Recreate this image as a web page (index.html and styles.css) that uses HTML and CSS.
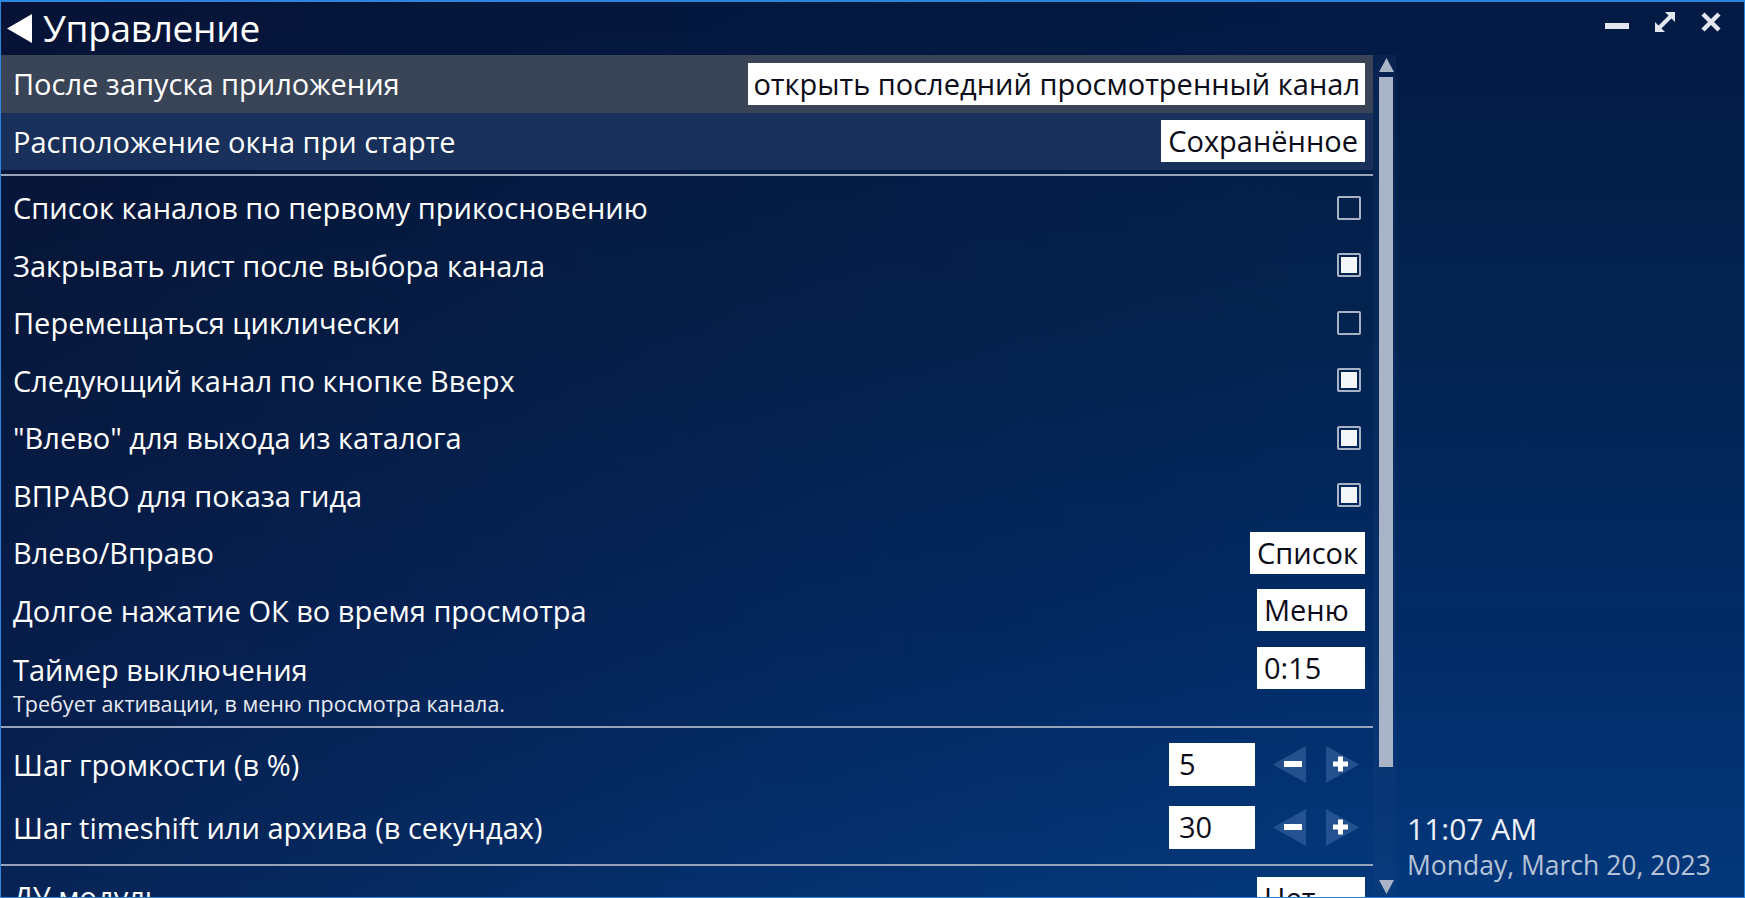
FILE: index.html
```html
<!DOCTYPE html>
<html lang="ru">
<head>
<meta charset="utf-8">
<title>Управление</title>
<link rel="stylesheet" href="styles.css">
</head>
<body>
<div class="window">
  <header class="titlebar">
    <div class="title">
      <svg class="back" width="26" height="30" viewBox="0 0 26 30"><polygon points="25,0 25,29 0,14.5" fill="#fff"/></svg>
      <span>Управление</span>
    </div>
    <div class="wincontrols">
      <svg class="wc wc-min" width="24" height="20" viewBox="0 0 24 20"><rect x="0" y="11" width="24" height="6" fill="#e2e6ee"/></svg>
      <svg class="wc wc-max" width="20" height="20" viewBox="0 0 20 20"><line x1="4" y1="16" x2="16" y2="4" stroke="#e2e6ee" stroke-width="4"/><polygon points="20,0 20,10 10,0" fill="#e2e6ee"/><polygon points="0,20 0,10 10,20" fill="#e2e6ee"/></svg>
      <svg class="wc wc-close" width="20" height="20" viewBox="0 0 20 20"><line x1="2" y1="2" x2="18" y2="18" stroke="#e2e6ee" stroke-width="4.5"/><line x1="18" y1="2" x2="2" y2="18" stroke="#e2e6ee" stroke-width="4.5"/></svg>
    </div>
  </header>
  <div class="main">
    <div class="list">
      <div class="row row-hl"><span class="label">После запуска приложения</span><span class="value value-wide">открыть последний просмотренный канал</span></div>
      <div class="row row-hl2"><span class="label">Расположение окна при старте</span><span class="value">Сохранённое</span></div>
      <div class="sep sep-first"></div>
      <div class="row"><span class="label">Список каналов по первому прикосновению</span><span class="check"></span></div>
      <div class="row"><span class="label">Закрывать лист после выбора канала</span><span class="check checked"></span></div>
      <div class="row"><span class="label">Перемещаться циклически</span><span class="check"></span></div>
      <div class="row"><span class="label">Следующий канал по кнопке Вверх</span><span class="check checked"></span></div>
      <div class="row"><span class="label">"Влево" для выхода из каталога</span><span class="check checked"></span></div>
      <div class="row"><span class="label">ВПРАВО для показа гида</span><span class="check checked"></span></div>
      <div class="row"><span class="label">Влево/Вправо</span><span class="value">Список</span></div>
      <div class="row"><span class="label">Долгое нажатие ОК во время просмотра</span><span class="value value-fixed">Меню</span></div>
      <div class="row row-tall">
        <div class="labels">
          <span class="label">Таймер выключения</span>
          <span class="hint">Требует активации, в меню просмотра канала.</span>
        </div>
        <span class="value value-fixed">0:15</span>
      </div>
      <div class="sep sep-mid"></div>
      <div class="row row-step"><span class="label">Шаг громкости (в %)</span>
        <div class="stepper">
          <span class="value value-num">5</span>
          <svg class="stepbtn" width="34" height="37" viewBox="0 0 34 37"><polygon points="0,18.5 33,0 33,37" fill="#3f6aa6" fill-opacity="0.55"/><rect x="11" y="15" width="18" height="6" fill="#fff"/></svg>
          <svg class="stepbtn" width="34" height="37" viewBox="0 0 34 37"><polygon points="0,0 33,18.5 0,37" fill="#3f6aa6" fill-opacity="0.55"/><rect x="7" y="15.5" width="15" height="5" fill="#fff"/><rect x="12" y="10.5" width="5" height="15" fill="#fff"/></svg>
        </div>
      </div>
      <div class="row row-step"><span class="label">Шаг timeshift или архива (в секундах)</span>
        <div class="stepper">
          <span class="value value-num">30</span>
          <svg class="stepbtn" width="34" height="37" viewBox="0 0 34 37"><polygon points="0,18.5 33,0 33,37" fill="#3f6aa6" fill-opacity="0.55"/><rect x="11" y="15" width="18" height="6" fill="#fff"/></svg>
          <svg class="stepbtn" width="34" height="37" viewBox="0 0 34 37"><polygon points="0,0 33,18.5 0,37" fill="#3f6aa6" fill-opacity="0.55"/><rect x="7" y="15.5" width="15" height="5" fill="#fff"/><rect x="12" y="10.5" width="5" height="15" fill="#fff"/></svg>
        </div>
      </div>
      <div class="sep sep-last"></div>
      <div class="row row-last"><span class="label">ДУ модуль</span><span class="value value-fixed">Нет</span></div>
    </div>
    <div class="scrollbar">
      <svg class="arrow" width="15" height="14" viewBox="0 0 15 14"><polygon points="7.5,0 15,14 0,14" fill="#a9b5c7"/></svg>
      <div class="thumb"></div>
      <div class="track-rest"></div>
      <svg class="arrow" width="15" height="14" viewBox="0 0 15 14"><polygon points="0,0 15,0 7.5,14" fill="#a9b5c7"/></svg>
    </div>
    <div class="side">
      <div class="clock">
        <div class="time">11:07 AM</div>
        <div class="date">Monday, March 20, 2023</div>
      </div>
    </div>
  </div>
</div>
</body>
</html>
```

FILE: styles.css
```css
* { box-sizing: border-box; }
html, body { margin: 0; padding: 0; }
body {
  width: 1745px;
  height: 898px;
  overflow: hidden;
  font-family: "Open Sans", "Noto Sans", sans-serif;
  color: #fff;
}
.window {
  width: 1745px;
  height: 898px;
  border: 1px solid #2a86dc;
  border-top-width: 2px;
  overflow: hidden;
  display: flex;
  flex-direction: column;
  background:
    linear-gradient(to right, rgba(12, 10, 36, 0.45) 0%, rgba(12, 10, 36, 0.15) 45%, rgba(0, 0, 0, 0) 75%),
    linear-gradient(to bottom, #021a44 0%, #03234f 35%, #022b66 70%, #03387c 100%);
}
.titlebar {
  height: 53px;
  flex: none;
  display: flex;
  align-items: center;
  justify-content: space-between;
}
.title {
  display: flex;
  align-items: center;
  padding-left: 6px;
  gap: 10px;
  font-size: 37px;
  line-height: 1;
  letter-spacing: -0.3px;
}
.title span { position: relative; top: -1px; }
.wincontrols {
  display: flex;
  align-items: center;
  gap: 26px;
  padding-right: 23px;
  margin-top: -14px;
}
.main {
  flex: 1;
  display: flex;
  min-height: 0;
}
.list {
  width: 1372px;
  flex: none;
  display: flex;
  flex-direction: column;
  font-size: 29px;
}
.row {
  height: 57.5px;
  flex: none;
  display: flex;
  align-items: center;
  justify-content: space-between;
  padding: 0 8px 0 12px;
}
.row-hl { background: #3a4457; }
.row-hl2 { background: #18305a; }
.label { white-space: nowrap; }
.value {
  background: #fff;
  color: #0c0c18;
  height: 42px;
  line-height: 42px;
  padding: 0 7px;
  font-size: 29px;
  white-space: nowrap;
}
.value-wide { padding: 0 5px; }
.value-fixed { min-width: 108px; }
.value-num { width: 86px; padding-left: 10px; height: 43px; }
.check {
  width: 24px;
  height: 24px;
  border: 2px solid #a8b3c6;
  border-radius: 2px;
  margin-right: 4px;
  padding: 2px;
}
.checked::after {
  content: "";
  display: block;
  width: 16px;
  height: 16px;
  background: #f4f6fa;
}
.sep {
  height: 2px;
  flex: none;
  background: #97a3b8;
}
.sep-first { margin: 4px 0 3px; }
.sep-mid { margin: 2px 0 5px; }
.sep-last { margin: 5px 0 1px; }
.row-tall {
  height: 85px;
  align-items: flex-start;
  padding-top: 8px;
}
.labels {
  display: flex;
  flex-direction: column;
}
.labels .label { line-height: 46px; }
.hint {
  font-size: 21.5px;
  line-height: 26px;
  color: #e6eaf2;
  margin-top: -2px;
}
.row-step { height: 63px; }
.stepper {
  display: flex;
  align-items: center;
  margin-right: 5px;
}
.stepbtn { margin-left: 18px; }
.stepbtn + .stepbtn { margin-left: 19px; }
.row-last { height: 63px; align-items: flex-start; padding-top: 10px; }
.scrollbar {
  width: 23px;
  flex: none;
  display: flex;
  flex-direction: column;
  align-items: center;
  padding: 3px 0 3px;
  background: rgba(40, 70, 125, 0.18);
}
.scrollbar .arrow { flex: none; margin-left: 3px; }
.thumb {
  width: 14px;
  height: 690px;
  background: #a9b5c7;
  margin-top: 5px;
  margin-left: 3px;
}
.track-rest { flex: 1; }
.side {
  flex: 1;
  display: flex;
  align-items: flex-end;
  padding: 0 0 14px 11px;
}
.time {
  font-size: 30px;
  line-height: 38px;
  color: #eef2f8;
}
.date {
  font-size: 26.5px;
  line-height: 35px;
  color: #b7c3d6;
}
```
